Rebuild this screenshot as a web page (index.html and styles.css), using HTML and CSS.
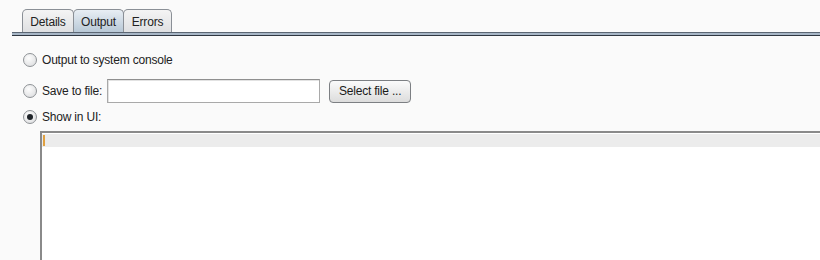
FILE: index.html
```html
<!DOCTYPE html>
<html>
<head>
<meta charset="utf-8">
<link rel="stylesheet" href="styles.css">
</head>
<body>
<div class="tabbar">
  <div class="tab t-details">Details</div>
  <div class="tab t-output active">Output</div>
  <div class="tab t-errors">Errors</div>
</div>
<div class="tabline"></div>
<div class="content">
  <div class="row r1"><span class="radio"></span><span class="label">Output to system console</span></div>
  <div class="row r2"><span class="radio"></span><span class="label">Save to file:</span><span class="field"></span><span class="button">Select file ...</span></div>
  <div class="row r3"><span class="radio checked"></span><span class="label">Show in UI:</span></div>
  <div class="area">
    <div class="curline"><span class="caret"></span></div>
  </div>
</div>
</body>
</html>
```
FILE: styles.css
```css
html, body { margin: 0; padding: 0; }
body {
  width: 820px; height: 260px; overflow: hidden;
  background: #fafafa;
  font-family: "Liberation Sans", Arial, sans-serif;
  font-size: 12px; color: #222;
  letter-spacing: -0.2px;
}
.tabbar {
  display: flex;
  padding: 9px 0 0 22px;
  height: 23px;
}
.tab {
  box-sizing: border-box;
  height: 23px;
  padding-top: 5px;
  text-align: center;
  border: 1px solid #8a8f96;
  border-bottom: none;
  border-radius: 5px 5px 0 0;
  background: linear-gradient(#f4f4f4, #dfe0e2);
  margin-right: -1px;
  color: #222;
}
.t-details { width: 52px; }
.t-output { width: 51px; }
.t-errors { width: 49px; }
.tab.active {
  background: linear-gradient(#e8eef4, #b8c8d6);
}
.tabline {
  margin-left: 12px;
  height: 2px;
  border-top: 1px solid #5b6673;
  background: #a7b6c6;
  border-bottom: 1px solid #2f3640;
}
.content {
  padding-left: 23px;
}
.row { display: flex; align-items: center; }
.r1 { height: 22px; margin-top: 13px; }
.r2 { height: 24px; margin-top: 8px; }
.r3 { height: 20px; margin-top: 4px; }
.radio {
  box-sizing: border-box;
  width: 14px; height: 14px;
  border-radius: 50%;
  border: 1px solid #8e9296;
  background: radial-gradient(circle at 40% 35%, #fdfdfd, #d8d9db);
  margin-right: 5px;
  display: flex; align-items: center; justify-content: center;
}
.radio.checked::after {
  content: "";
  width: 6px; height: 6px; border-radius: 50%;
  background: #1e2328;
}
.label { color: #222; }
.field {
  box-sizing: border-box;
  width: 213px; height: 24px;
  margin-left: 5px;
  background: #fff;
  border: 1px solid #a9a9a9;
  border-top-color: #8f8f8f;
  box-shadow: inset 1px 1px 0 #e2e2e2;
}
.button {
  box-sizing: border-box;
  height: 23px; width: 82px;
  margin-left: 9px;
  border: 1px solid #7c7f83;
  border-radius: 4px;
  background: linear-gradient(#fbfbfb, #dcdcdc);
  display: flex; align-items: center; justify-content: center;
  color: #1a1a1a;
}
.area {
  margin-left: 17px;
  margin-top: 4px;
  height: 140px;
  background: #fff;
  border-top: 2px solid #8a8a8a;
  border-left: 2px solid #8a8a8a;
}
.curline {
  height: 13px;
  margin-top: 1px;
  background: #ececec;
  display: flex;
}
.caret {
  width: 2px; height: 11px;
  margin: 1px 0 0 1px;
  background: #e0a040;
}
```
